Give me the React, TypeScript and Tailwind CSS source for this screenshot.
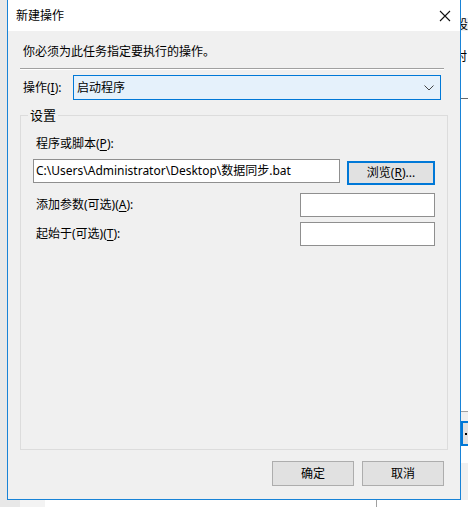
const font = { fontFamily: '"Noto Sans", "Noto Sans CJK SC", sans-serif' };

function U({ c }: { c: string }) {
  return <span className="underline underline-offset-2">{c}</span>;
}

export default function App() {
  return (
    <div className="w-[468px] h-[507px] overflow-hidden bg-white flex flex-col text-[12px] text-black" style={font}>
      <div className="flex h-[500px]">
        <div className="w-[7px] bg-[#e8e8e8]" />
        <div className="w-[454px] flex flex-col border-x border-b border-[#1883d7]">
          <div className="h-[31px] bg-white flex items-center justify-between pl-[8px] pr-[8px]">
            <span className="leading-none">新建操作</span>
            <svg width="12" height="12" viewBox="0 0 12 12" className="mr-[1px]">
              <path d="M1 1L11 11M11 1L1 11" stroke="#111" strokeWidth="1.1" />
            </svg>
          </div>
          <div className="flex-1 bg-[#f0f0f0] flex flex-col">
            <div className="pl-[15px] mt-[13px] h-[16px] leading-[16px]">你必须为此任务指定要执行的操作。</div>
            <div className="ml-[12px] w-[424px] mt-[8px] border-t border-[#a0a0a0] border-b border-b-white" />
            <div className="flex items-center mt-[5px] h-[25px]">
              <span className="pl-[15px] w-[65px]">操作(<U c="I" />):</span>
              <div className="w-[368px] h-[25px] bg-[#e5f1fb] border border-[#0078d7] flex items-center justify-between pl-[3px] pr-[6px]">
                <span>启动程序</span>
                <svg width="10" height="6" viewBox="0 0 10 6">
                  <path d="M0.5 0.5L5 5L9.5 0.5" fill="none" stroke="#444" strokeWidth="1" />
                </svg>
              </div>
            </div>
            <div className="relative ml-[12px] w-[428px] h-[335px] mt-[15px] border border-[#dcdcdc] pl-[15px] pr-[12px]">
              <span className="absolute -top-[9px] left-[7px] bg-[#f0f0f0] px-[2px] leading-[16px] text-[13px]">设置</span>
              <div className="mt-[20px] h-[16px] leading-[16px]">程序或脚本(<U c="P" />):</div>
              <div className="flex items-start mt-[7px] -ml-[3px]">
                <div className="w-[307px] h-[24px] bg-white border border-[#8f8f8f] flex items-center pl-[2px]">C:\Users\Administrator\Desktop\数据同步.bat</div>
                <div className="ml-[7px] mt-[2px] w-[88px] h-[24px] bg-[#e1e1e1] border-2 border-[#0078d7] flex items-center justify-center">浏览(<U c="R" />)...</div>
              </div>
              <div className="flex items-center justify-between mt-[8px] h-[24px]">
                <span>添加参数(可选)(<U c="A" />):</span>
                <div className="w-[135px] h-[24px] bg-white border border-[#8f8f8f]" />
              </div>
              <div className="flex items-center justify-between mt-[5px] h-[24px]">
                <span>起始于(可选)(<U c="T" />):</span>
                <div className="w-[135px] h-[24px] bg-white border border-[#8f8f8f]" />
              </div>
            </div>
            <div className="flex justify-end gap-[8px] mt-[11px] mr-[16px]">
              <div className="w-[82px] h-[25px] bg-[#e1e1e1] border border-[#adadad] flex items-center justify-center">确定</div>
              <div className="w-[82px] h-[25px] bg-[#e1e1e1] border border-[#adadad] flex items-center justify-center">取消</div>
            </div>
          </div>
        </div>
        <div className="w-[7px] flex flex-col overflow-hidden">
          <div className="h-[18px] bg-white" />
          <div className="h-[13px] bg-[#f0f0f0] leading-[13px] whitespace-nowrap -ml-[5px]">设</div>
          <div className="h-[67px] bg-white pt-[20px] leading-[12px] whitespace-nowrap -ml-[6px]">村</div>
          <div className="h-[1px] bg-[#696969]" />
          <div className="h-[312px] bg-white" />
          <div className="h-[1px] bg-[#a0a0a0]" />
          <div className="h-[9px] bg-[#f0f0f0]" />
          <div className="h-[25px] border-y-2 border-l-2 border-[#0078d7] bg-[#e1e1e1] flex items-center pl-[2px]">
            <span className="w-[2px] h-[2px] bg-black" />
          </div>
          <div className="h-[17px] bg-white" />
          <div className="flex-1 bg-[#f0f0f0]" />
        </div>
      </div>
      <div className="flex h-[7px]">
        <div className="w-[20px] bg-[#e8e8e8]" />
        <div className="w-[25px] bg-[#f3f3f3]" />
        <div className="w-[331px] bg-white" />
        <div className="w-[1px] bg-[#a0a0a0]" />
        <div className="flex-1 bg-white" />
      </div>
    </div>
  );
}
